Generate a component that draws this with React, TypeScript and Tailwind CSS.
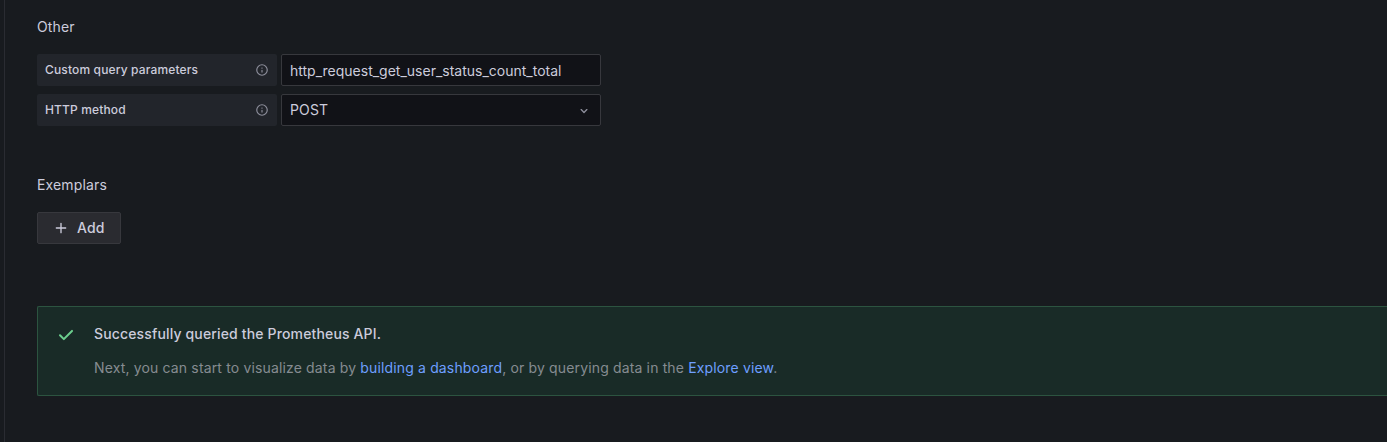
import type { ReactNode } from "react";

const icons = {
  info: "M12,2A10,10,0,1,0,22,12,10.01114,10.01114,0,0,0,12,2Zm0,18a8,8,0,1,1,8-8A8.00917,8.00917,0,0,1,12,20Zm0-8.5a1,1,0,0,0-1,1v3a1,1,0,0,0,2,0v-3A1,1,0,0,0,12,11.5Zm0-4a1.25,1.25,0,1,0,1.25,1.25A1.25,1.25,0,0,0,12,7.5Z",
  angleDown:
    "M17,9.17a1,1,0,0,0-1.41,0L12,12.71,8.46,9.17a1,1,0,0,0-1.41,0,1,1,0,0,0,0,1.42l4.24,4.24a1,1,0,0,0,1.42,0L17,10.59A1,1,0,0,0,17,9.17Z",
  plus: "M19,11H13V5a1,1,0,0,0-2,0v6H5a1,1,0,0,0,0,2h6v6a1,1,0,0,0,2,0V13h6a1,1,0,0,0,0-2Z",
  check:
    "M18.71,7.21a1,1,0,0,0-1.42,0L9.84,14.67,6.71,11.53A1,1,0,1,0,5.29,13l3.84,3.84a1,1,0,0,0,1.42,0l8.16-8.16A1,1,0,0,0,18.71,7.21Z",
};

function Icon({ name, className }: { name: keyof typeof icons; className: string }) {
  return (
    <svg viewBox="0 0 24 24" fill="currentColor" className={`shrink-0 ${className}`} aria-hidden="true">
      <path d={icons[name]} />
    </svg>
  );
}

function Field({ label, children }: { label: string; children: ReactNode }) {
  return (
    <div className="flex h-8 gap-1">
      <div className="flex w-60 items-center justify-between rounded-[2px] bg-[#22252b] px-2 text-xs font-medium">
        <span>{label}</span>
        <Icon name="info" className="size-3.5 text-[#8e8f9c]" />
      </div>
      {children}
    </div>
  );
}

function Link({ children }: { children: ReactNode }) {
  return (
    <a href="#" className="text-[#6e9fff]">
      {children}
    </a>
  );
}

export default function App() {
  return (
    <div className="flex h-[442px] w-full overflow-hidden bg-[#181b1f] pl-1 font-['Inter',sans-serif] text-sm leading-[22px] tracking-[0.01071em] text-[#ccccdc]">
      <main className="flex min-w-0 flex-1 flex-col border-l border-[#2a2c32] pt-4 pl-8">
        <h6>Other</h6>
        <div className="mt-4 flex flex-col gap-2">
          <Field label="Custom query parameters">
            <input
              className="w-80 rounded-[2px] border border-[#37383d] bg-[#111217] px-2 pt-0.5 tracking-normal outline-none"
              defaultValue="http_request_get_user_status_count_total"
            />
          </Field>
          <Field label="HTTP method">
            <div className="flex w-80 items-center justify-between rounded-[2px] border border-[#37383d] bg-[#111217] px-2">
              <span>POST</span>
              <Icon name="angleDown" className="mt-0.5 size-4 text-[#8e8f9c]" />
            </div>
          </Field>
        </div>
        <h6 className="mt-12">Exemplars</h6>
        <button className="mt-4 flex h-8 w-[84px] items-center gap-2 rounded-[2px] border border-[#37383d] bg-[#2a2b30] px-[15px] font-medium">
          <Icon name="plus" className="size-4" />
          Add
        </button>
        <div className="mt-[62px] flex h-[90px] rounded-l-[2px] border border-r-0 border-[#2c5440] bg-[#192b27] py-4 pl-4">
          <Icon name="check" className="size-6 text-[#6ccf8e]" />
          <div className="ml-4">
            <div className="font-medium">Successfully queried the Prometheus API.</div>
            <div className="mt-3 text-[#868b91]">
              Next, you can start to visualize data by <Link>building a dashboard</Link>, or by querying data in the{" "}
              <Link>Explore view</Link>.
            </div>
          </div>
        </div>
      </main>
    </div>
  );
}
